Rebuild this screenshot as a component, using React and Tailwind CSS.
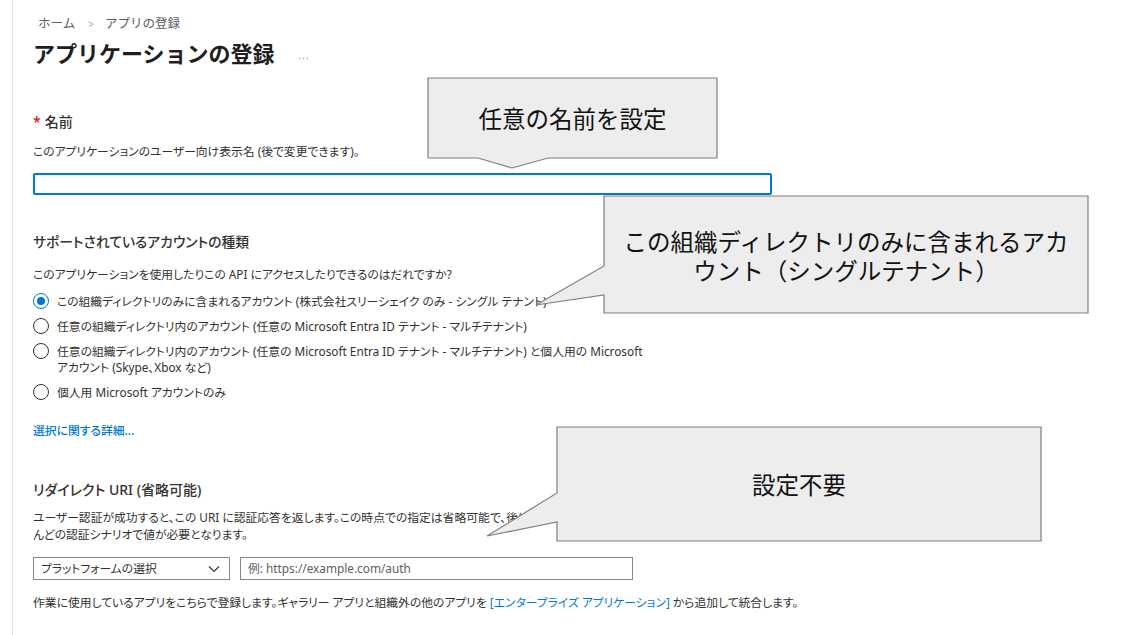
import React from "react";

const FONT = "font-['Noto_Sans','Noto_Sans_CJK_JP',sans-serif] [font-feature-settings:'palt']";

const Callout = ({ left, top, w, h, path, children }) => (
  <div className="absolute" style={{ left, top, width: w, height: h }}>
    <svg className="absolute left-0 top-0 overflow-visible" width={w} height={h}>
      <path d={path} fill="#ededed" stroke="#7f7f7f" strokeWidth="1.2" />
    </svg>
    <div className="relative flex h-full w-full items-center justify-center text-center font-['Noto_Sans_CJK_JP',sans-serif] text-[23.5px] leading-[29px] text-[#111] [font-feature-settings:normal]">
      {children}
    </div>
  </div>
);

const Radio = ({ checked, children }) => (
  <div className="flex items-start gap-[8px]">
    <span
      className={`flex h-[16px] w-[16px] shrink-0 items-center justify-center rounded-full border ${
        checked ? "border-[#0078d4]" : "border-[#323130]"
      }`}
    >
      {checked && <span className="h-[8px] w-[8px] rounded-full bg-[#0078d4]" />}
    </span>
    <span className="text-[11.8px] leading-[16px]">{children}</span>
  </div>
);

export default function App() {
  return (
    <div className={`relative h-[635px] w-[1141px] overflow-hidden bg-white text-[#323130] ${FONT}`}>
      <div className="ml-[12px] h-full border-l border-[#e5e5e5] pl-[20px] pt-[16px]">
        {/* breadcrumb */}
        <div className="flex items-center gap-[11px] pl-[5px] text-[12.5px] leading-[16px] text-[#605e5c] [font-feature-settings:normal]">
          <span>ホーム</span>
          <span className="ml-[2px] text-[10px] text-[#a19f9d]">&gt;</span>
          <span>アプリの登録</span>
        </div>

        <div className="mt-[7px] flex items-center">
          <h1 className="text-[22px] font-bold leading-[28px] text-[#201f1e] [font-feature-settings:normal]">
            アプリケーションの登録
          </h1>
          <span className="ml-[24px] mt-[4px] text-[10px] leading-none tracking-[1px] text-[#8a8886]">...</span>
        </div>

        {/* name */}
        <div className="mt-[45px] flex items-center text-[14px] font-medium leading-[20px]">
          <span className="mr-[4px] text-[#e00b1c]">*</span>
          <span>名前</span>
        </div>
        <p className="mt-[11px] text-[11.8px] leading-[16px]">
          このアプリケーションのユーザー向け表示名 (後で変更できます)。
        </p>
        <div className="mt-[14px] h-[22px] w-[739px] rounded-[2px] border-2 border-[#0078d4] bg-white" />

        {/* account types */}
        <h2 className="mt-[37px] text-[13.8px] font-medium leading-[20px]">サポートされているアカウントの種類</h2>
        <p className="mt-[14px] text-[11.8px] leading-[16px]">
          このアプリケーションを使用したりこの API にアクセスしたりできるのはだれですか?
        </p>
        <div className="mt-[11px] flex flex-col gap-[9px]">
          <Radio checked>この組織ディレクトリのみに含まれるアカウント (株式会社スリーシェイク のみ - シングル テナント)</Radio>
          <Radio>任意の組織ディレクトリ内のアカウント (任意の Microsoft Entra ID テナント - マルチテナント)</Radio>
          <Radio>
            任意の組織ディレクトリ内のアカウント (任意の Microsoft Entra ID テナント - マルチテナント) と個人用の Microsoft
            <br />
            アカウント (Skype、Xbox など)
          </Radio>
          <Radio>個人用 Microsoft アカウントのみ</Radio>
        </div>

        <a className="mt-[22px] block text-[11.8px] font-medium leading-[16px] text-[#0078d4]">選択に関する詳細...</a>

        {/* redirect */}
        <h2 className="mt-[42px] text-[14px] font-medium leading-[20px]">リダイレクト URI (省略可能)</h2>
        <p className="mt-[9px] text-[11.8px] leading-[17px]">
          ユーザー認証が成功すると、この URI に認証応答を返します。この時点での指定は省略可能で、後ほど変更することもできますが、ほと
          <br />
          んどの認証シナリオで値が必要となります。
        </p>
        <div className="mt-[14px] flex items-center gap-[10px]">
          <div className="flex h-[23px] w-[197px] items-center justify-between border border-[#8a8886] px-[7px] text-[11.8px] text-[#323130]">
            <span>プラットフォームの選択</span>
            <svg width="12" height="8" viewBox="0 0 12 8" className="mr-[2px]">
              <path d="M1 1.5 L6 6.5 L11 1.5" fill="none" stroke="#323130" strokeWidth="1.1" />
            </svg>
          </div>
          <div className="flex h-[23px] w-[393px] items-center border border-[#8a8886] px-[7px] text-[11.8px] text-[#605e5c]">
            例: https://example.com/auth
          </div>
        </div>
        <p className="mt-[14px] text-[11.8px] leading-[16px]">
          作業に使用しているアプリをこちらで登録します。ギャラリー アプリと組織外の他のアプリを{" "}
          <span className="text-[#0078d4]">[エンタープライズ アプリケーション]</span> から追加して統合します。
        </p>
      </div>

      {/* annotations */}
      <Callout left={428} top={78} w={289} h={80} path="M0,0 H289 V80 H120 L84,90 L50,80 H0 Z">
        任意の名前を設定
      </Callout>
      <Callout left={604} top={196} w={484} h={117} path="M0,0 H484 V117 H0 V99 L-68,109 L0,70 Z">
        <div className="pt-[2px]">
          この組織ディレクトリのみに含まれるアカ
          <br />
          ウント（シングルテナント）
        </div>
      </Callout>
      <Callout left={557} top={427} w={484} h={114} path="M0,0 H484 V114 H0 V95 L-70,109 L0,66 Z">
        設定不要
      </Callout>
    </div>
  );
}
